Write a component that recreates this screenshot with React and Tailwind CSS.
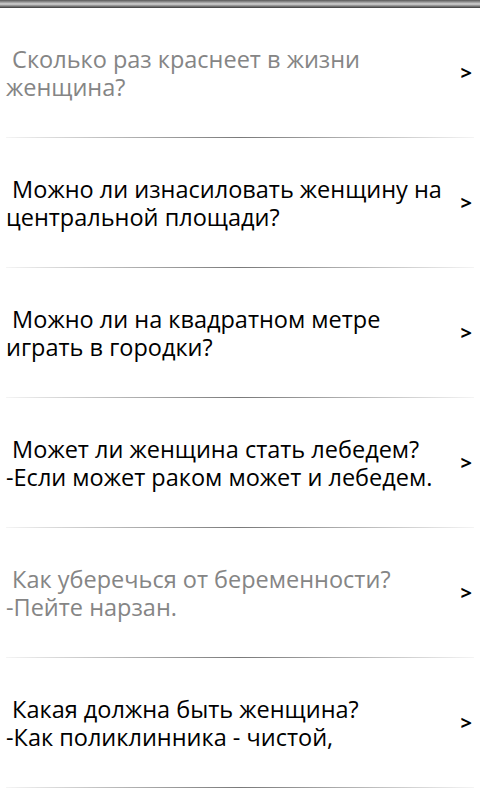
import React from 'react';

const items = [
  { text: ' Сколько раз краснеет в жизни женщина?', dim: true },
  { text: ' Можно ли изнасиловать женщину на центральной площади?' },
  { text: ' Можно ли на квадратном метре играть в городки?' },
  { text: ' Может ли женщина стать лебедем?\n-Если может раком может и лебедем.' },
  { text: ' Как уберечься от беременности?\n-Пейте нарзан.', dim: true },
  { text: ' Какая должна быть женщина?\n-Как поликлинника - чистой,' },
];

const Row = ({ text, dim }) => (
  <div className="flex flex-col">
    <div className="h-[129px] flex items-center pl-[6px] pr-[8px]">
      <div
        className={`flex-1 whitespace-pre-wrap text-[23.5px] leading-[28px] ${dim ? 'text-[#858585]' : 'text-black'}`}
      >
        {text}
      </div>
      <span className="ml-3 text-[20px] font-bold text-black leading-none">&gt;</span>
    </div>
    <div className="h-px mx-[6px] bg-gradient-to-r from-[#f4f4f4] via-[#7a7a7a] to-[#f4f4f4]" />
  </div>
);

export default function App() {
  return (
    <div className="w-[480px] h-[800px] bg-white overflow-hidden" style={{ fontFamily: '"Open Sans", "Noto Sans", sans-serif' }}>
      <div className="h-[8px] bg-gradient-to-b from-[#5a5a5a] via-[#d4d4d4] to-[#3c3c3c]" />
      {items.map((it, i) => (
        <Row key={i} {...it} />
      ))}
    </div>
  );
}
